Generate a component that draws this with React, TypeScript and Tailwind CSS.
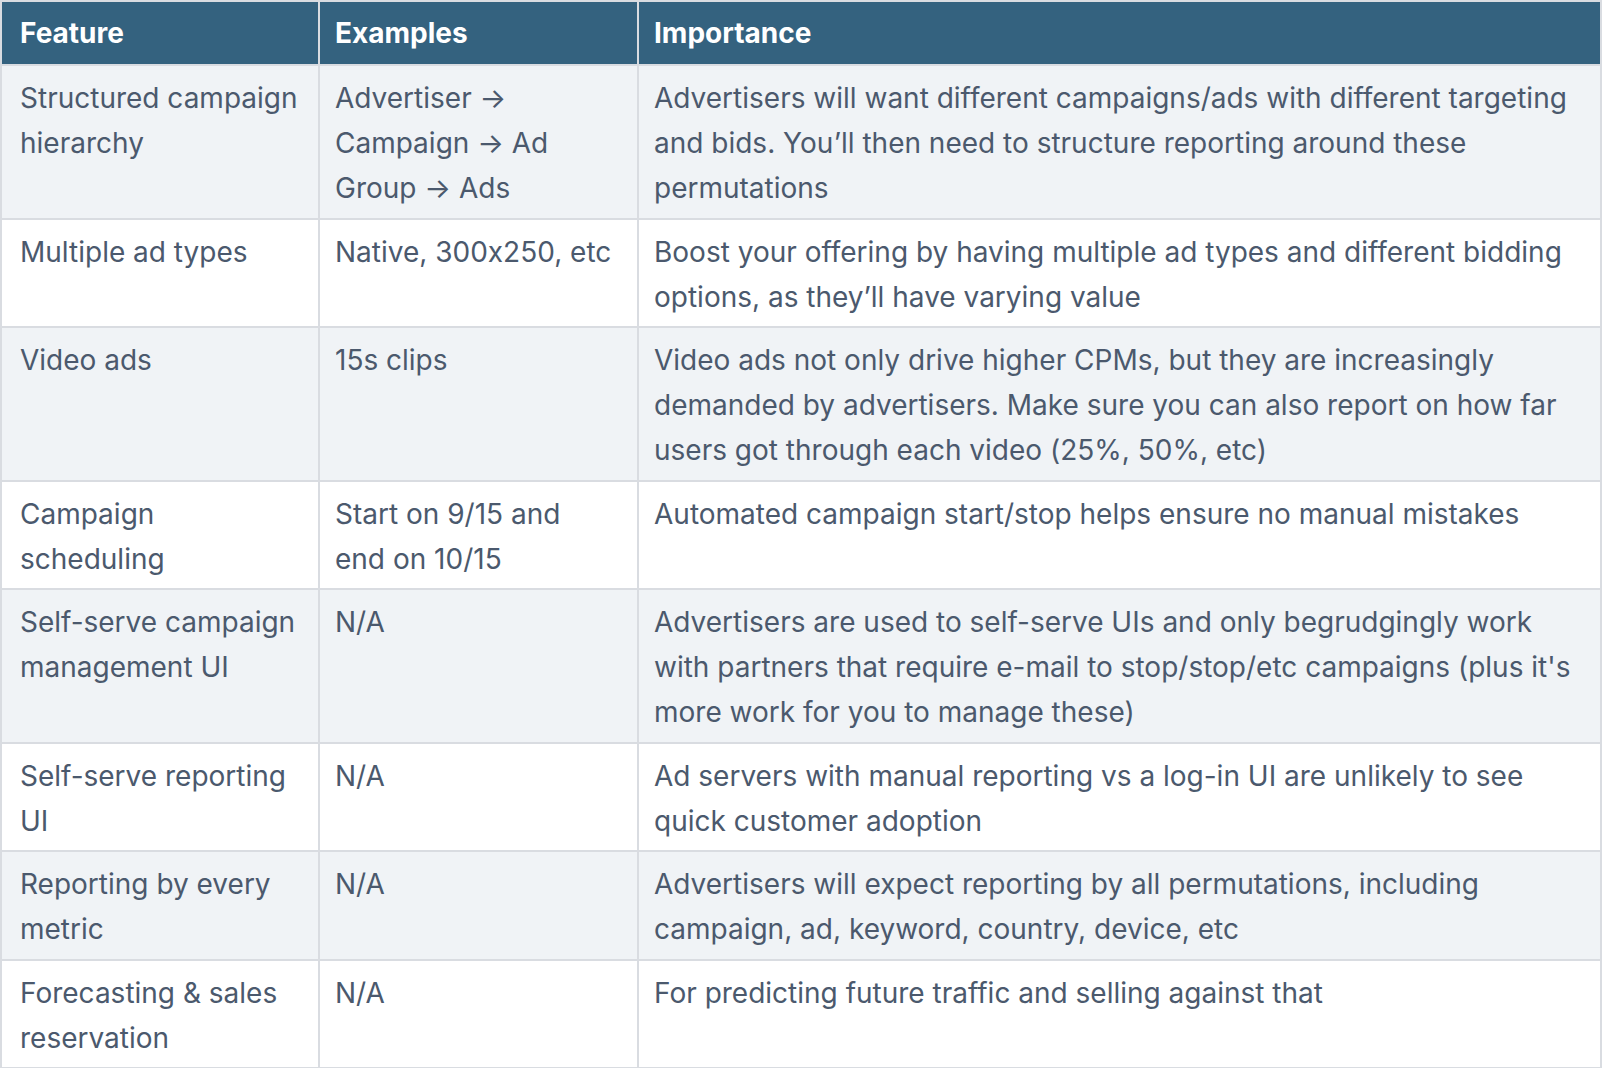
import React from 'react';

interface Row {
  feature: string;
  examples: string;
  importance: string;
}

const rows: Row[] = [
  {
    feature: 'Structured campaign hierarchy',
    examples: 'Advertiser → Campaign → Ad Group → Ads',
    importance:
      'Advertisers will want different campaigns/ads with different targeting and bids. You’ll then need to structure reporting around these permutations',
  },
  {
    feature: 'Multiple ad types',
    examples: 'Native, 300x250, etc',
    importance:
      'Boost your offering by having multiple ad types and different bidding options, as they’ll have varying value',
  },
  {
    feature: 'Video ads',
    examples: '15s clips',
    importance:
      'Video ads not only drive higher CPMs, but they are increasingly demanded by advertisers. Make sure you can also report on how far users got through each video (25%, 50%, etc)',
  },
  {
    feature: 'Campaign scheduling',
    examples: 'Start on 9/15 and end on 10/15',
    importance: 'Automated campaign start/stop helps ensure no manual mistakes',
  },
  {
    feature: 'Self-serve campaign management UI',
    examples: 'N/A',
    importance:
      "Advertisers are used to self-serve UIs and only begrudgingly work with partners that require e-mail to stop/stop/etc campaigns (plus it's more work for you to manage these)",
  },
  {
    feature: 'Self-serve reporting UI',
    examples: 'N/A',
    importance:
      'Ad servers with manual reporting vs a log-in UI are unlikely to see quick customer adoption',
  },
  {
    feature: 'Reporting by every metric',
    examples: 'N/A',
    importance:
      'Advertisers will expect reporting by all permutations, including campaign, ad, keyword, country, device, etc',
  },
  {
    feature: 'Forecasting & sales reservation',
    examples: 'N/A',
    importance: 'For predicting future traffic and selling against that',
  },
];

const base = 'border-2 border-[#d9dce1] align-top';
const head = `${base} pt-[9px] pb-[8px] font-bold`;
const body = `${base} pt-[10px] pb-[6.5px]`;

export default function App() {
  return (
    <div className="min-h-screen bg-white font-['Inter',sans-serif] text-[28px] leading-[45px] text-[#4b596d] [font-feature-settings:'calt'_0]">
      <table className="w-[1602px] table-fixed border-collapse">
        <colgroup>
          <col className="w-[318px]" />
          <col className="w-[319px]" />
          <col />
        </colgroup>
        <thead>
          <tr className="bg-[#34627f] text-left text-white">
            <th className={`${head} pl-[18px] pr-[16px]`}>Feature</th>
            <th className={`${head} pl-[15px] pr-[19px]`}>Examples</th>
            <th className={`${head} pl-[15px] pr-[19px]`}>Importance</th>
          </tr>
        </thead>
        <tbody>
          {rows.map((row, i) => (
            <tr key={row.feature} className={i % 2 === 0 ? 'bg-[#f0f3f6]' : 'bg-white'}>
              <td className={`${body} pl-[18px] pr-[16px]`}>{row.feature}</td>
              <td className={`${body} pl-[15px] pr-[19px]`}>{row.examples}</td>
              <td className={`${body} pl-[15px] pr-[19px]`}>{row.importance}</td>
            </tr>
          ))}
        </tbody>
      </table>
    </div>
  );
}
